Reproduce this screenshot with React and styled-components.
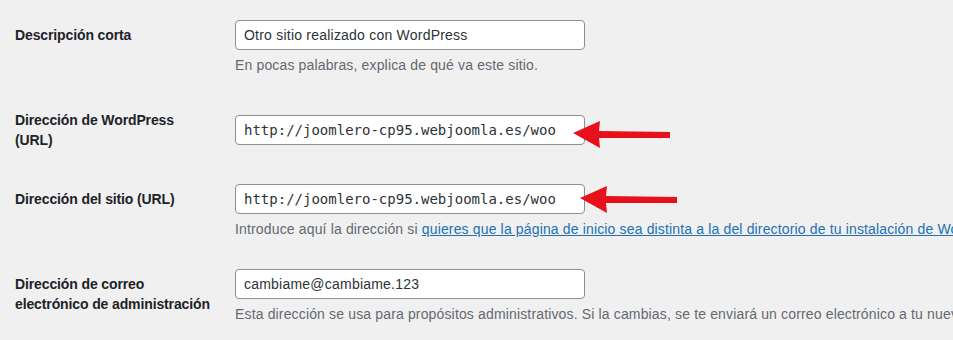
import styled, { createGlobalStyle } from "styled-components";

const GlobalStyle = createGlobalStyle`
	html, body {
		margin: 0;
		padding: 0;
		background: #f0f0f1;
		overflow: hidden;
	}
	body {
		font-family: "Liberation Sans", Arial, sans-serif;
		color: #1d2327;
	}
`;

const Page = styled.div`
	padding: 5px 0 0 15px;
	width: 1200px;
`;

const FormTable = styled.div`
	display: grid;
	grid-template-columns: 210px 1fr;
`;

const Label = styled.div`
	padding: 21px 10px 19px 0;
	font-size: 14px;
	font-weight: 700;
	line-height: 19.5px;
	letter-spacing: -0.12px;
	color: #1d2327;
	width: 200px;
`;

const Cell = styled.div`
	padding: 15px 10px;
	align-self: center;
`;

const Field = styled.div`
	position: relative;
	width: 350px;
`;

const Input = styled.input`
	box-sizing: border-box;
	width: 350px;
	height: 30px;
	padding: 0 8px;
	border: 1px solid #8c8f94;
	border-radius: 4px;
	background: #fff;
	color: #2c3338;
	font-size: 14px;
	letter-spacing: ${(p) => (p.$code ? "0" : "0.22px")};
	font-family: ${(p) =>
		p.$code
			? '"DejaVu Sans Mono", "Liberation Mono", monospace'
			: '"Liberation Sans", Arial, sans-serif'};
	outline: none;
`;

const Description = styled.p`
	margin: 5px 0 0;
	font-size: 14px;
	line-height: 20px;
	letter-spacing: 0.15px;
	color: #646970;
	white-space: nowrap;
`;

const DocLink = styled.a`
	color: #2271b1;
	text-decoration: underline;
`;

const ArrowMark = styled.svg`
	position: absolute;
	left: ${(p) => p.$left}px;
	top: ${(p) => p.$top}px;
`;

const Arrow = ({ left, top }) => (
	<ArrowMark $left={left} $top={top} width="110" height="32" viewBox="0 0 110 32">
		<polygon points="3,14 30,2 29,12 100,13 100,19 29,19 30,29" fill="#e8111b" />
	</ArrowMark>
);

export default function App() {
	return (
		<>
			<GlobalStyle />
			<Page>
				<FormTable>
					<Label>Descripción corta</Label>
					<Cell>
						<Input defaultValue="Otro sitio realizado con WordPress" />
						<Description>En pocas palabras, explica de qué va este sitio.</Description>
					</Cell>

					<Label>Dirección de WordPress (URL)</Label>
					<Cell>
						<Field>
							<Input $code defaultValue="http://joomlero-cp95.webjoomla.es/woo" />
							<Arrow left={335} top={4} />
						</Field>
					</Cell>

					<Label>Dirección del sitio (URL)</Label>
					<Cell>
						<Field>
							<Input $code defaultValue="http://joomlero-cp95.webjoomla.es/woo" />
							<Arrow left={342} top={0} />
						</Field>
						<Description>
							Introduce aquí la dirección si{" "}
							<DocLink href="#">
								quieres que la página de inicio sea distinta a la del directorio de tu instalación de WordPress
							</DocLink>
							.
						</Description>
					</Cell>

					<Label>Dirección de correo electrónico de administración</Label>
					<Cell>
						<Input defaultValue="cambiame@cambiame.123" />
						<Description>
							Esta dirección se usa para propósitos administrativos. Si la cambias, se te enviará un correo electrónico a tu nueva dirección para confirmarla. ¡La nueva dirección no será efectiva hasta que se confirme!
						</Description>
					</Cell>
				</FormTable>
			</Page>
		</>
	);
}
